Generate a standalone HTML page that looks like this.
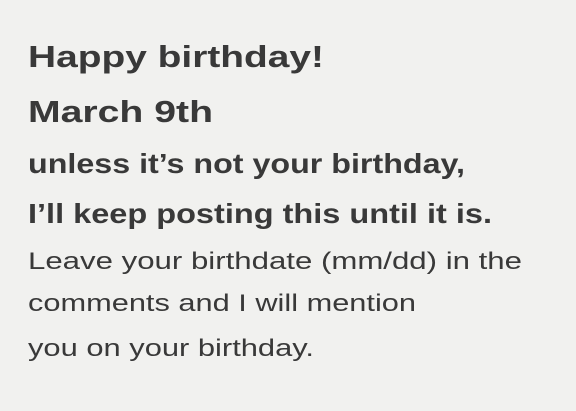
<!DOCTYPE html>
<html><head><style>
html,body{margin:0;padding:0;background:#f1f1ef;}
svg{display:block}
text{font-family:"Liberation Sans",sans-serif;fill:#393939}
</style></head><body>
<svg width="576" height="411" viewBox="0 0 576 411">
<rect width="576" height="411" fill="#f1f1ef"/>
<g font-weight="bold">
<text x="28" y="67" font-size="31" textLength="296" lengthAdjust="spacingAndGlyphs">Happy birthday!</text>
<text x="28" y="122" font-size="31" textLength="185" lengthAdjust="spacingAndGlyphs">March 9th</text>
<text x="28" y="173" font-size="27.5" textLength="437" lengthAdjust="spacingAndGlyphs">unless it’s not your birthday,</text>
<text x="28" y="223" font-size="27.5" textLength="464" lengthAdjust="spacingAndGlyphs">I’ll keep posting this until it is.</text>
</g>
<text x="28" y="269" font-size="24" textLength="494" lengthAdjust="spacingAndGlyphs">Leave your birthdate (mm/dd) in the</text>
<text x="28" y="311" font-size="24" textLength="388" lengthAdjust="spacingAndGlyphs">comments and I will mention</text>
<text x="28" y="356" font-size="24" textLength="286" lengthAdjust="spacingAndGlyphs">you on your birthday.</text>
</svg>
</body></html>
